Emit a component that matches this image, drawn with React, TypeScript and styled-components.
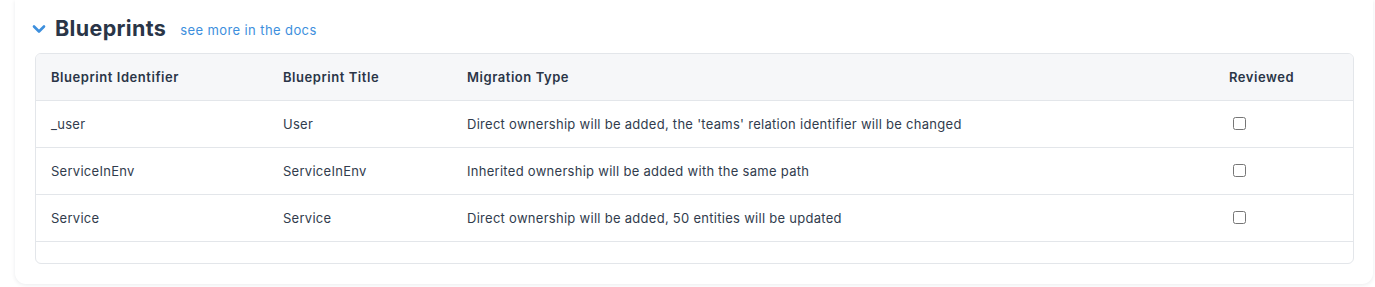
import React, { FC } from "react";
import styled, { createGlobalStyle } from "styled-components";

const textColor = "#313c4d";
const headColor = "#2a3547";
const borderColor = "#e3e6ea";
const linkColor = "#3d8fdd";

type Row = {
  identifier: string;
  title: string;
  migration: string;
};

const rows: Row[] = [
  {
    identifier: "_user",
    title: "User",
    migration:
      "Direct ownership will be added, the 'teams' relation identifier will be changed",
  },
  {
    identifier: "ServiceInEnv",
    title: "ServiceInEnv",
    migration: "Inherited ownership will be added with the same path",
  },
  {
    identifier: "Service",
    title: "Service",
    migration: "Direct ownership will be added, 50 entities will be updated",
  },
];

const GlobalStyle = createGlobalStyle`
  body {
    margin: 0;
    background: #ffffff;
    font-family: Inter, "Noto Sans", sans-serif;
    color: ${textColor};
  }
`;

const Chevron: FC = () => (
  <svg width="14" height="10" viewBox="0 0 14 10" fill="none">
    <polyline
      points="2,2.5 7,7.5 12,2.5"
      stroke={linkColor}
      strokeWidth="2.6"
      strokeLinecap="round"
      strokeLinejoin="round"
    />
  </svg>
);

/**
 * Blueprints migration section
 */
const App: FC = () => {
  return (
    <>
      <GlobalStyle />
      <Card>
        <Header>
          <Toggle>
            <Chevron />
          </Toggle>
          <Title>Blueprints</Title>
          <DocsLink href="#">see more in the docs</DocsLink>
        </Header>
        <TableBox>
          <Table>
            <colgroup>
              <col style={{ width: 232 }} />
              <col style={{ width: 184 }} />
              <col />
              <col style={{ width: 139 }} />
            </colgroup>
            <thead>
              <tr>
                <Th>Blueprint Identifier</Th>
                <Th>Blueprint Title</Th>
                <Th>Migration Type</Th>
                <Th>Reviewed</Th>
              </tr>
            </thead>
            <tbody>
              {rows.map((row) => (
                <tr key={row.identifier}>
                  <Td>{row.identifier}</Td>
                  <Td>{row.title}</Td>
                  <Td>{row.migration}</Td>
                  <Td>
                    <Check type="checkbox" />
                  </Td>
                </tr>
              ))}
              <tr>
                <FillerCell colSpan={4} />
              </tr>
            </tbody>
          </Table>
        </TableBox>
      </Card>
    </>
  );
};

export default App;

const Card = styled.div`
  margin: 0 2px 4px 15px;
  padding: 13px 19px 20px 20px;
  background: #ffffff;
  border-radius: 0 0 11px 11px;
  box-shadow: 0 1px 4px rgba(20, 30, 50, 0.09);
`;

const Header = styled.div`
  display: flex;
  align-items: center;
  height: 30px;
  margin-bottom: 10px;
`;

const Toggle = styled.span`
  display: flex;
  align-items: center;
  margin-left: -3px;
  margin-right: 7px;
  padding-top: 2px;
`;

const Title = styled.h2`
  margin: 0 0 0 2px;
  font-size: 21.5px;
  font-weight: 700;
  color: ${headColor};
  letter-spacing: 0.35px;
`;

const DocsLink = styled.a`
  margin-left: 14px;
  padding-top: 3px;
  font-size: 13px;
  letter-spacing: 0.4px;
  color: ${linkColor};
  text-decoration: none;
`;

const TableBox = styled.div`
  border: 1px solid ${borderColor};
  border-radius: 6px;
  overflow: hidden;
`;

const Table = styled.table`
  width: 100%;
  border-collapse: collapse;
  table-layout: fixed;
  font-size: 13px;
  letter-spacing: 0.28px;
`;

const Th = styled.th`
  height: 46px;
  padding: 0 15px;
  text-align: left;
  font-weight: 600;
  letter-spacing: 0.55px;
  color: ${headColor};
  background: #f6f7f9;
  border-bottom: 1px solid ${borderColor};
`;

const Td = styled.td`
  height: 46px;
  padding: 0 15px;
  text-align: left;
  color: ${textColor};
  border-bottom: 1px solid ${borderColor};
  vertical-align: middle;
`;

const FillerCell = styled.td`
  height: 21px;
  padding: 0;
`;

const Check = styled.input`
  width: 13px;
  height: 13px;
  margin: 0 0 2px 4px;
  vertical-align: middle;
`;
